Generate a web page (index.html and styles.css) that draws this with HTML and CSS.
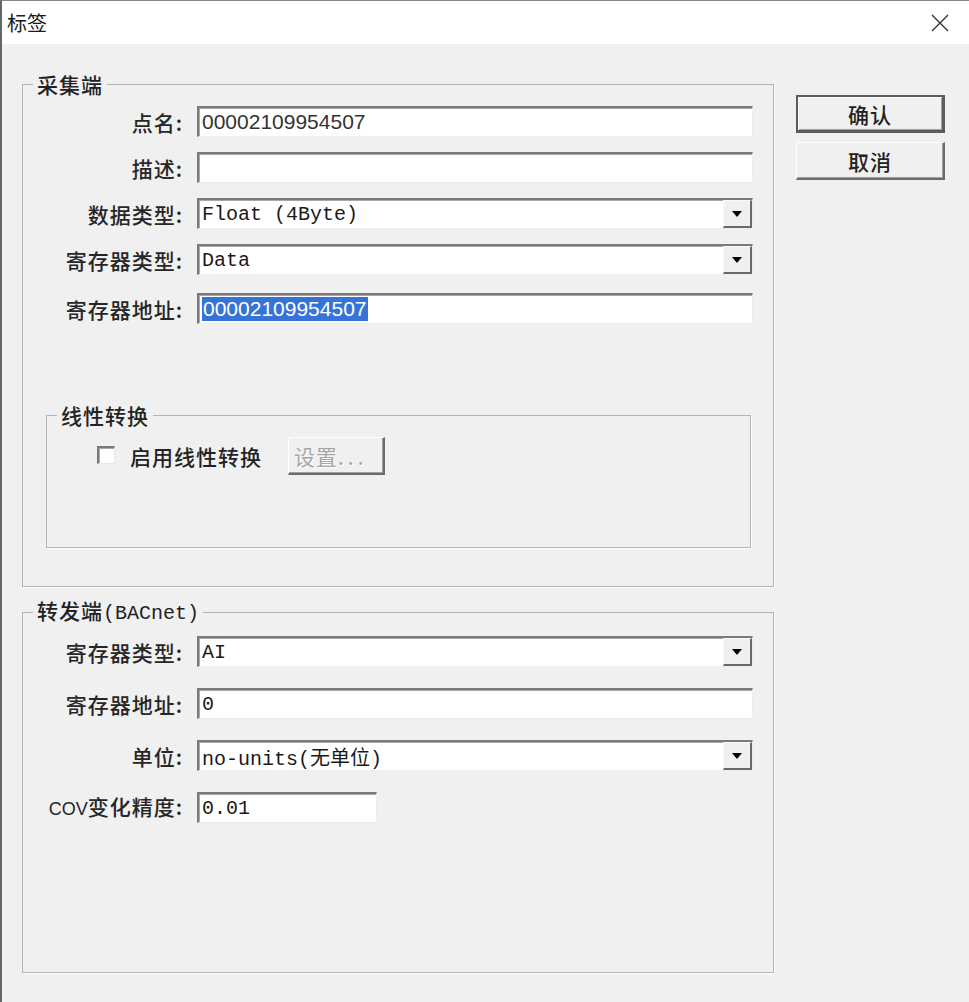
FILE: index.html
```html
<!DOCTYPE html>
<html lang="zh-CN">
<head>
    <meta charset="UTF-8">
    <meta name="viewport" content="width=device-width, initial-scale=1.0">
    <title>标签</title>
    <link rel="stylesheet" href="styles.css">
</head>
<body>
    <div class="window">
        <div class="titlebar">
            <span class="title">标签</span>
            <span class="close">
                <svg width="18" height="18" viewBox="0 0 18 18"><path d="M1 1L17 17M17 1L1 17" stroke="#333" stroke-width="1.4" fill="none"/></svg>
            </span>
        </div>
        <div class="client">
            <div class="groups">
                <fieldset class="group group-source">
                    <legend>采集端</legend>
                    <div class="form">
                        <label>点名:</label>
                        <div class="field sans">00002109954507</div>
                        <label>描述:</label>
                        <div class="field"></div>
                        <label>数据类型:</label>
                        <div class="field combo mono"><span>Float (4Byte)</span><span class="drop"></span></div>
                        <label>寄存器类型:</label>
                        <div class="field combo mono"><span>Data</span><span class="drop"></span></div>
                        <label class="lower">寄存器地址:</label>
                        <div class="field sans lower"><span class="selected">00002109954507</span></div>
                    </div>
                    <fieldset class="group group-linear">
                        <legend>线性转换</legend>
                        <div class="check-row">
                            <span class="checkbox"></span>
                            <span class="check-label">启用线性转换</span>
                            <button class="btn btn-small" disabled>设置<span class="dots">...</span></button>
                        </div>
                    </fieldset>
                </fieldset>
                <fieldset class="group group-forward">
                    <legend>转发端<span class="latin">(BACnet)</span></legend>
                    <div class="form form-wide">
                        <label>寄存器类型:</label>
                        <div class="field combo mono"><span>AI</span><span class="drop"></span></div>
                        <label>寄存器地址:</label>
                        <div class="field mono">0</div>
                        <label>单位:</label>
                        <div class="field combo mono"><span>no-units(无单位)</span><span class="drop"></span></div>
                        <label><span class="cov">COV</span>变化精度:</label>
                        <div class="field mono field-short">0.01</div>
                    </div>
                </fieldset>
            </div>
            <div class="buttons">
                <button class="btn btn-default">确认</button>
                <button class="btn">取消</button>
            </div>
        </div>
    </div>
</body>
</html>
```

FILE: styles.css
```css
* {
    box-sizing: border-box;
}
body {
    margin: 0;
    background: #f0f0f0;
    font-family: "Noto Sans CJK SC", sans-serif;
    color: #222;
}
.window {
    width: 969px;
    height: 1002px;
    border-left: 2px solid #666;
    border-top: 1px solid #888;
    background: #f0f0f0;
    overflow: hidden;
}
.titlebar {
    height: 43px;
    background: #fff;
    display: flex;
    align-items: center;
    justify-content: space-between;
    padding: 0 20px 0 5px;
}
.title {
    font-size: 20px;
    color: #1a1a1a;
}
.close {
    display: flex;
    margin-top: 1px;
}
.client {
    display: flex;
    align-items: flex-start;
    padding-left: 20px;
}
.groups {
    width: 752px;
}
.group {
    margin: 0;
    padding: 0;
    border: 1px solid #b4b4b4;
    box-shadow: 1px 1px 0 #fff;
    min-width: 0;
}
.group legend {
    margin-left: 10px;
    padding: 0 4px;
    font-size: 21px;
    font-weight: 500;
    line-height: 24px;
    letter-spacing: 1px;
    color: #222;
}
.latin {
    font-family: "Liberation Mono", monospace;
    font-size: 20px;
    letter-spacing: 0;
}
.group-source {
    margin-top: 28px;
    padding: 10px 0 38px 0;
}
.group-linear {
    margin: 79px 22px 0 23px;
    padding: 10px 0 72px 0;
}
.group-forward {
    margin-top: 11px;
    padding: 10px 0 149px 0;
}
.form {
    display: grid;
    grid-template-columns: 160px 556px;
    column-gap: 14px;
    row-gap: 15px;
    align-items: center;
}
.form-wide {
    row-gap: 21px;
}
.form label {
    text-align: right;
    font-size: 21px;
    font-weight: 500;
    line-height: 24px;
    letter-spacing: 1px;
    color: #262626;
    white-space: nowrap;
}
.form .lower {
    margin-top: 3px;
}
.cov {
    font-family: "Liberation Sans", sans-serif;
    font-size: 18px;
    letter-spacing: 0;
}
.field {
    height: 31px;
    background: #fff;
    border-style: solid;
    border-width: 2px 1px 1px 2px;
    border-color: #7a7a7a #ececec #ececec #7a7a7a;
    box-shadow: inset 1px 1px 0 #a8a8a8;
    padding-left: 3px;
    display: flex;
    align-items: center;
    white-space: nowrap;
    color: #1a1a1a;
}
.field-short {
    width: 180px;
}
.sans {
    font-family: "Liberation Sans", sans-serif;
    font-size: 21px;
    color: #333;
}
.mono {
    font-family: "Liberation Mono", "Noto Sans CJK SC", monospace;
    font-size: 20px;
}
.selected {
    background: #3574d6;
    color: #fff;
    line-height: 24px;
    padding: 0 1px;
}
.drop {
    margin-left: auto;
    width: 29px;
    align-self: stretch;
    background: #f0f0f0;
    border-style: solid;
    border-width: 1px 2px 2px 1px;
    border-color: #f8f8f8 #6a6a6a #6a6a6a #f8f8f8;
    display: flex;
    align-items: center;
    justify-content: center;
}
.drop::after {
    content: "";
    border-left: 5px solid transparent;
    border-right: 5px solid transparent;
    border-top: 6px solid #000;
}
.check-row {
    display: flex;
    align-items: center;
    height: 38px;
    padding-left: 50px;
}
.checkbox {
    width: 18px;
    height: 18px;
    margin-top: -3px;
    background: #fff;
    border-style: solid;
    border-width: 2px 1px 1px 2px;
    border-color: #7a7a7a #e8e8e8 #e8e8e8 #7a7a7a;
    box-shadow: inset 1px 1px 0 #a8a8a8;
}
.check-label {
    margin-left: 15px;
    font-size: 21px;
    font-weight: 500;
    line-height: 24px;
    letter-spacing: 1px;
    color: #222;
}
.btn {
    width: 149px;
    height: 38px;
    padding: 0;
    background: #f0f0f0;
    font-family: "Noto Sans CJK SC", sans-serif;
    font-size: 21px;
    font-weight: 500;
    letter-spacing: 1px;
    color: #222;
    border-style: solid;
    border-width: 1px 2px 2px 1px;
    border-color: #fff #6b6b6b #6b6b6b #fff;
    box-shadow: inset -1px -1px 0 #a0a0a0;
}
.btn-default {
    border-width: 2px 3px 3px 2px;
    border-color: #5c5c5c;
    box-shadow: inset 1px 1px 0 #fff, inset -1px -1px 0 #a0a0a0;
}
.btn-small {
    width: 97px;
    margin-left: 26px;
    text-align: left;
    padding-left: 5px;
    font-weight: normal;
}
.btn:disabled {
    color: #a6a6a6;
    text-shadow: 1px 1px 0 #fff;
}
.dots {
    letter-spacing: 4px;
}
.buttons {
    display: flex;
    flex-direction: column;
    gap: 9px;
    margin-left: 22px;
    margin-top: 51px;
}
```
